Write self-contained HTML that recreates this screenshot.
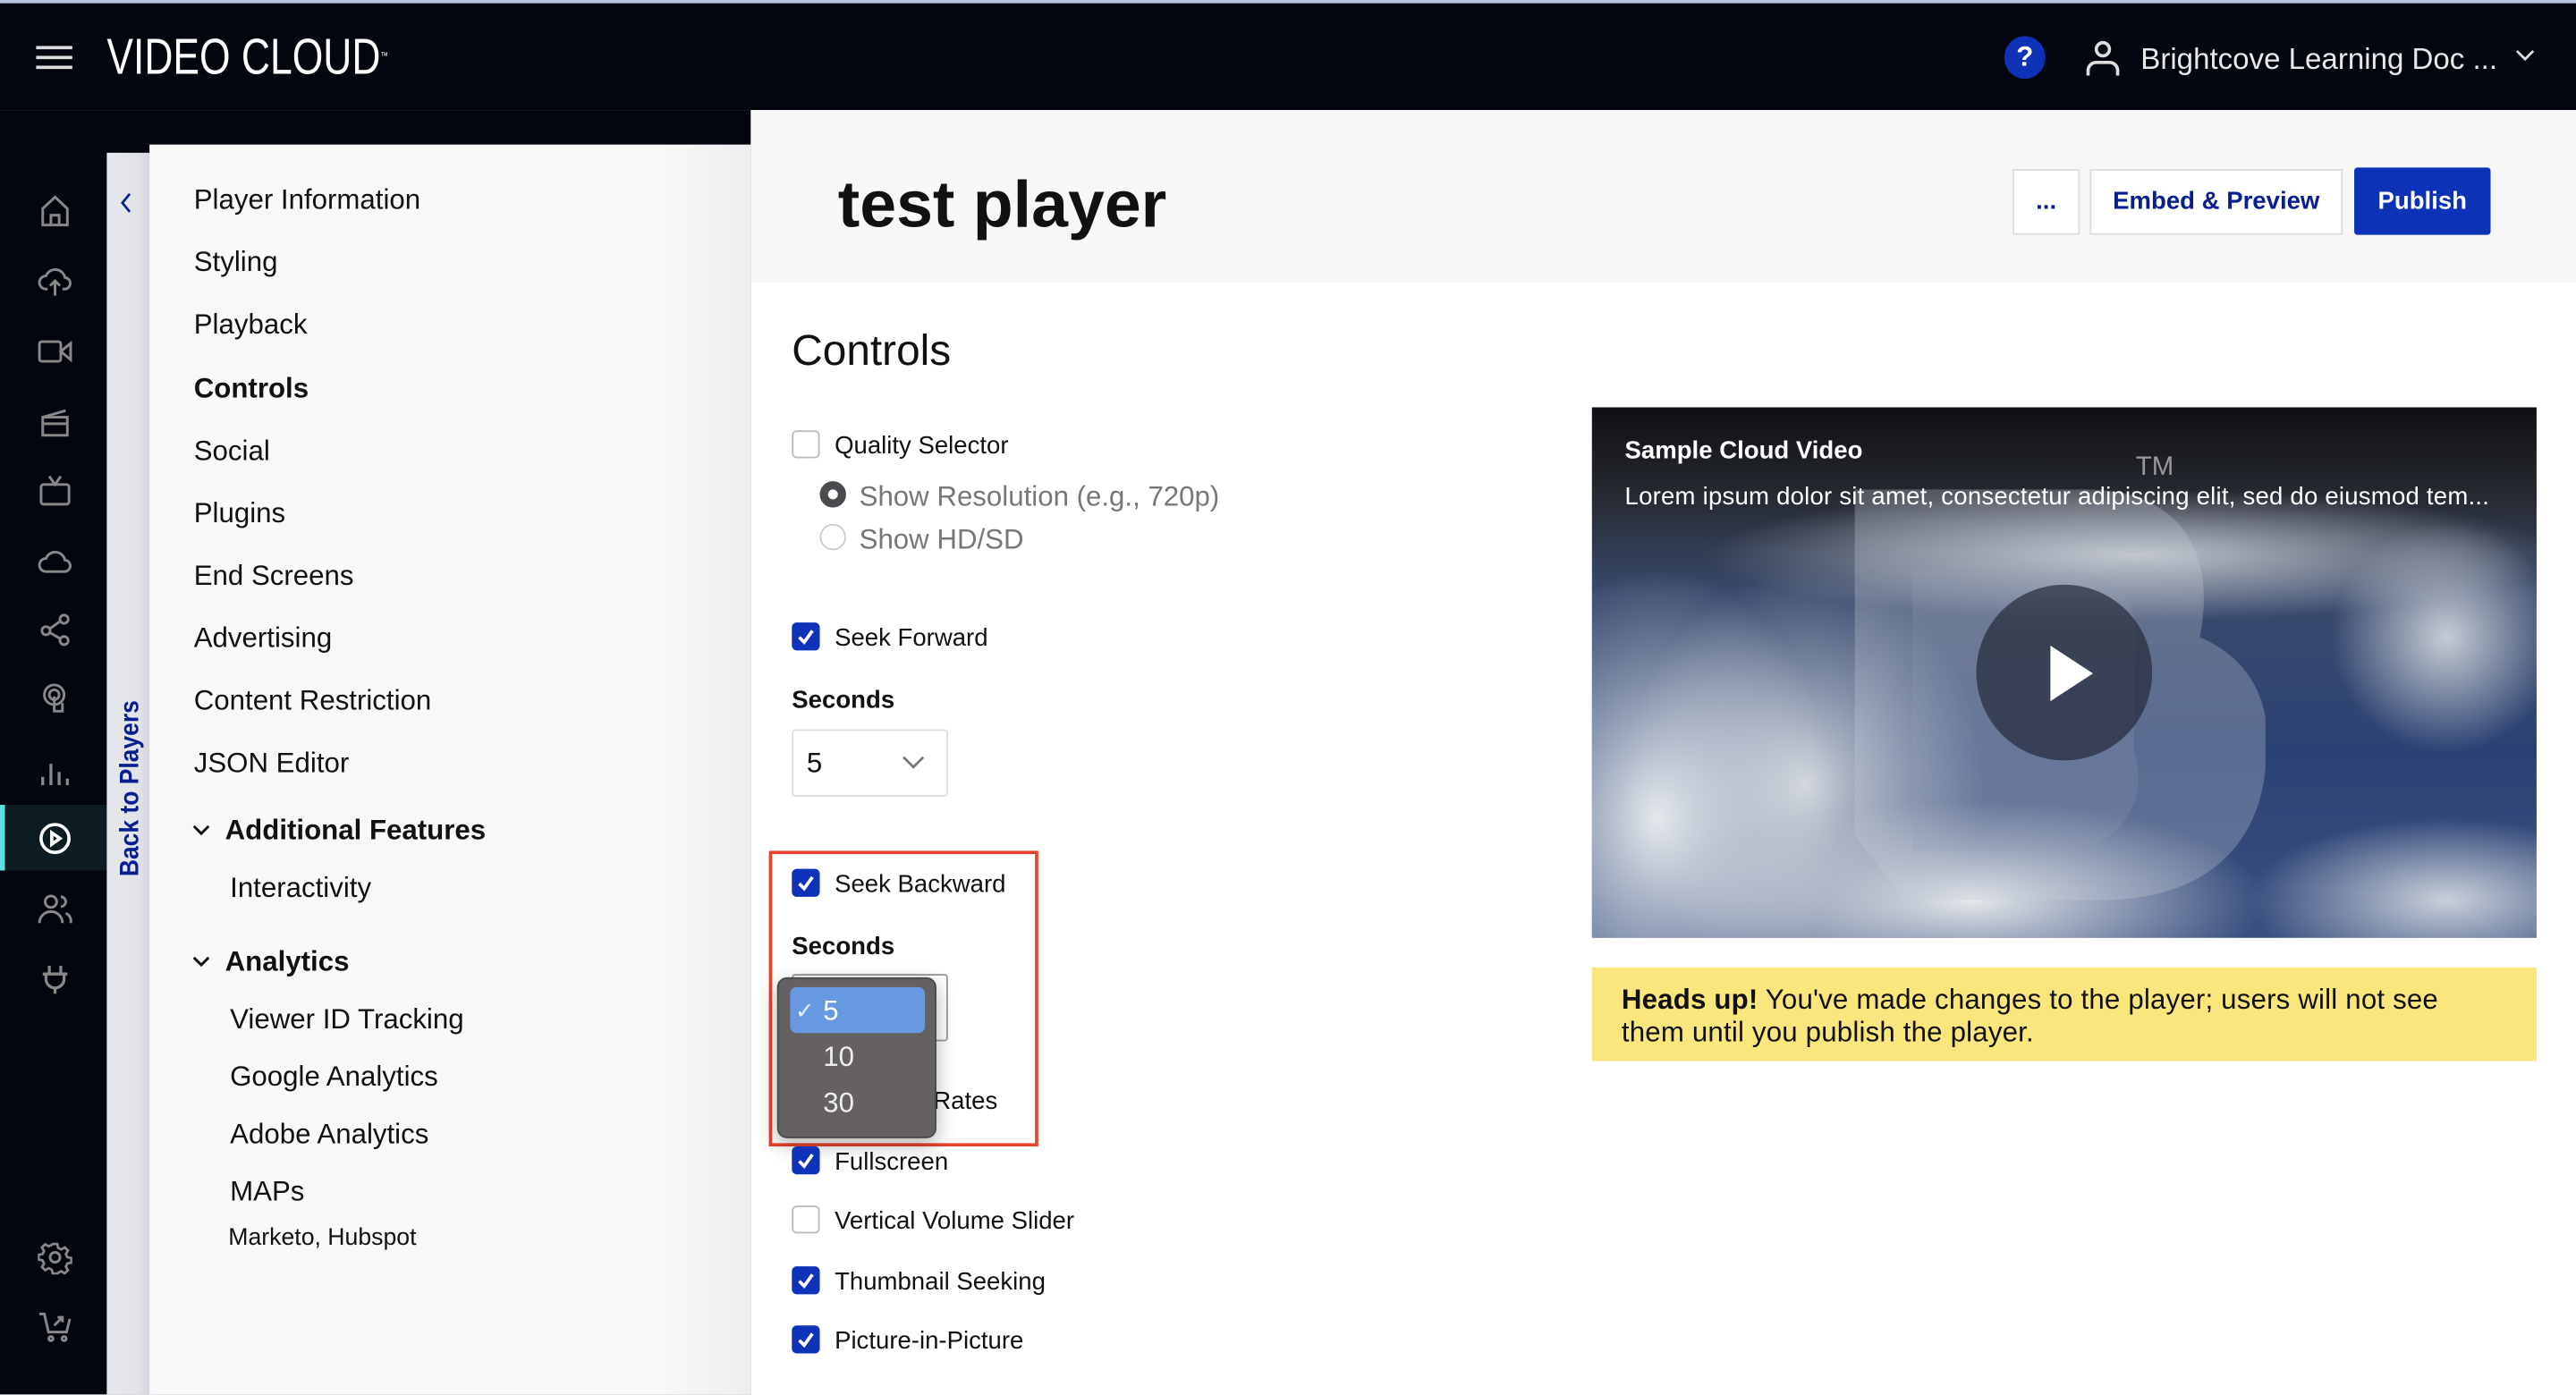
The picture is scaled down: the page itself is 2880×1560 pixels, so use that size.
<!DOCTYPE html>
<html><head><meta charset="utf-8"><style>
*{box-sizing:border-box;margin:0;padding:0}
html,body{width:2880px;height:1560px;overflow:hidden;background:#fff}
#s{position:absolute;left:0;top:0;width:1568px;height:849.4px;transform:scale(1.83674);transform-origin:0 0;font-family:"Liberation Sans",sans-serif;color:#111;background:#fff;overflow:hidden}
.a{position:absolute}
.ic{position:absolute;left:23px;width:21px;height:21px}
.mi{position:absolute;left:118px;font-size:17px;color:#111;line-height:20px;top:1px}
.cb{position:absolute;left:482px;width:17px;height:17px;border-radius:3px;background:#0e32b8}
.cb.off{background:#fff;border:1px solid #bbb}
.cb svg{position:absolute;left:3px;top:3px}
.lb{position:absolute;left:508px;font-size:15px;line-height:18px;color:#111}
</style></head><body><div id="s">
<div class="a" style="left:0;top:0;width:1568px;height:67px;background:#03050f"></div>
<div class="a" style="left:0;top:0;width:1568px;height:2px;background:#b8c4dc"></div>
<div class="a" style="left:0;top:67px;width:457px;height:790px;background:#03050f"></div>
<div class="a" style="left:22px;top:28px;width:22px;height:2px;background:#ddd"></div>
<div class="a" style="left:22px;top:34px;width:22px;height:2px;background:#ddd"></div>
<div class="a" style="left:22px;top:40px;width:22px;height:2px;background:#ddd"></div>
<div class="a" style="left:65px;top:17px;font-size:31px;color:#fff;line-height:36px;transform:scaleX(0.78);transform-origin:0 0;white-space:nowrap">VIDEO CLOUD<span style="font-size:6px;vertical-align:top">™</span></div>
<div class="a" style="left:1220px;top:22px;width:25px;height:26px;border-radius:50%;background:#0d32b5;color:#fff;font-weight:bold;font-size:17px;text-align:center;line-height:26px">?</div>
<svg class="a" style="left:1269px;top:24px" width="22" height="22" viewBox="0 0 22 22" fill="none" stroke="#ddd" stroke-width="2"><circle cx="11" cy="6" r="4"/><path d="M2 22v-3a5 5 0 0 1 5-5h8a5 5 0 0 1 5 5v3"/></svg>
<div class="a" style="left:1303px;top:25px;font-size:18px;color:#e8e8e8;line-height:22px">Brightcove Learning Doc ...</div>
<svg class="a" style="left:1531px;top:30px" width="12" height="8" viewBox="0 0 12 8" fill="none" stroke="#ddd" stroke-width="1.5"><path d="M1 1l5 5 5-5"/></svg>
<svg class="ic" style="top:118px" viewBox="0 0 21 21" fill="none" stroke="#888" stroke-width="1.6"><path d="M3 9l7.5-7 7.5 7v10H3z"/><path d="M8 19v-6h5v6"/></svg>
<svg class="ic" style="top:160px" viewBox="0 0 21 21" fill="none" stroke="#888" stroke-width="1.6"><path d="M6 16H5a4 4 0 0 1 0-8 6 6 0 0 1 11.5 1A3.5 3.5 0 0 1 16 16h-1"/><path d="M10.5 20v-9M7.5 14l3-3 3 3"/></svg>
<svg class="ic" style="top:203px" viewBox="0 0 21 21" fill="none" stroke="#888" stroke-width="1.6"><rect x="1" y="5" width="13" height="12" rx="1.5"/><path d="M14 11l6-5v10z"/></svg>
<svg class="ic" style="top:246px" viewBox="0 0 21 21" fill="none" stroke="#888" stroke-width="1.6"><rect x="3" y="8" width="15" height="11"/><path d="M3 8l14-4M3 12h15"/></svg>
<svg class="ic" style="top:288px" viewBox="0 0 21 21" fill="none" stroke="#888" stroke-width="1.6"><rect x="2" y="7" width="17" height="12" rx="1.5"/><path d="M7 2l3.5 5 3.5-5"/></svg>
<svg class="ic" style="top:331px" viewBox="0 0 21 21" fill="none" stroke="#888" stroke-width="1.6"><path d="M6 17H5a4 4 0 0 1 0-8 6 6 0 0 1 11.5 1A3.5 3.5 0 0 1 16 17z"/></svg>
<svg class="ic" style="top:373px" viewBox="0 0 21 21" fill="none" stroke="#888" stroke-width="1.6"><circle cx="5" cy="11" r="2.5"/><circle cx="16" cy="4" r="2.5"/><circle cx="16" cy="17" r="2.5"/><path d="M7 10l7-5M7 12l7 4"/></svg>
<svg class="ic" style="top:415px" viewBox="0 0 21 21" fill="none" stroke="#888" stroke-width="1.6"><circle cx="10" cy="8" r="6"/><circle cx="10" cy="8" r="3"/><path d="M10 9v9h5v-5"/></svg>
<svg class="ic" style="top:458px" viewBox="0 0 21 21" fill="none" stroke="#888" stroke-width="1.8"><path d="M3 20v-5M8 20V7M13 20v-8M18 20v-4"/></svg>
<div class="a" style="left:0;top:490px;width:65px;height:40px;background:#0d1b22"></div>
<div class="a" style="left:0;top:490px;width:3px;height:40px;background:#5fe0e0"></div>
<svg class="ic" style="top:500px" viewBox="0 0 21 21" fill="none" stroke="#fff" stroke-width="2"><circle cx="10.5" cy="10.5" r="8.5"/><path d="M8.5 7l5 3.5-5 3.5z"/></svg>
<svg class="ic" style="top:543px" viewBox="0 0 21 21" fill="none" stroke="#888" stroke-width="1.6"><circle cx="8" cy="6" r="3.5"/><path d="M1 19a7 7 0 0 1 14 0M14 3a3 3 0 0 1 0 6M17 13a5 5 0 0 1 3 6"/></svg>
<svg class="ic" style="top:585px" viewBox="0 0 21 21" fill="none" stroke="#888" stroke-width="1.8"><path d="M3 8h15M7 3v5M14 3v5M5 8v3a5.5 5.5 0 0 0 11 0V8M10.5 16v4"/></svg>
<svg class="ic" style="top:755px" viewBox="0 0 21 21" fill="none" stroke="#888" stroke-width="1.6"><circle cx="10.5" cy="10.5" r="3"/><path d="M9 2h3l.5 2.5 2 1 2.3-1.3 2 2-1.3 2.3 1 2 2.5.5v3l-2.5.5-1 2 1.3 2.3-2 2-2.3-1.3-2 1L12 21H9l-.5-2.5-2-1-2.3 1.3-2-2 1.3-2.3-1-2L0 12V9l2.5-.5 1-2L2.2 4.2l2-2 2.3 1.3 2-1z" transform="scale(.95) translate(.5 .5)"/></svg>
<svg class="ic" style="top:797px" viewBox="0 0 21 21" fill="none" stroke="#888" stroke-width="1.6"><path d="M1 3h3l2.5 11h11l2-8"/><circle cx="8" cy="18" r="1.3"/><circle cx="16" cy="18" r="1.3"/><path d="M10 10l5-5M12 5h3v3"/></svg>
<div class="a" style="left:65px;top:93px;width:27px;height:760px;background:linear-gradient(90deg,#e6e7ec,#e2e3e8 70%,#d4d5da)"></div>
<svg class="a" style="left:73px;top:117px" width="8" height="13" viewBox="0 0 8 13" fill="none" stroke="#0a1f8f" stroke-width="1.5"><path d="M6 1L1.5 6.5 6 12"/></svg>
<div class="a" style="left:80px;top:480px;transform:translate(-50%,-50%) rotate(-90deg) scaleX(0.9);white-space:nowrap;font-weight:bold;font-size:16px;color:#0a1f8f">Back to Players</div>
<div class="a" style="left:91px;top:88px;width:366px;height:770px;background:linear-gradient(90deg,#f8f8f8 85%,#eeeef0)"></div>
<div class="mi" style="top:112px">Player Information</div>
<div class="mi" style="top:150px">Styling</div>
<div class="mi" style="top:188px">Playback</div>
<div class="mi" style="top:227px;font-weight:bold">Controls</div>
<div class="mi" style="top:265px">Social</div>
<div class="mi" style="top:303px">Plugins</div>
<div class="mi" style="top:341px">End Screens</div>
<div class="mi" style="top:379px">Advertising</div>
<div class="mi" style="top:417px">Content Restriction</div>
<div class="mi" style="top:455px">JSON Editor</div>
<svg class="a" style="left:117px;top:502px" width="11" height="7" viewBox="0 0 11 7" fill="none" stroke="#111" stroke-width="1.6"><path d="M1 1l4.5 4.5L10 1"/></svg>
<div class="mi" style="left:137px;top:496px;font-weight:bold">Additional Features</div>
<div class="mi" style="left:140px;top:531px">Interactivity</div>
<svg class="a" style="left:117px;top:582px" width="11" height="7" viewBox="0 0 11 7" fill="none" stroke="#111" stroke-width="1.6"><path d="M1 1l4.5 4.5L10 1"/></svg>
<div class="mi" style="left:137px;top:576px;font-weight:bold">Analytics</div>
<div class="mi" style="left:140px;top:611px">Viewer ID Tracking</div>
<div class="mi" style="left:140px;top:646px">Google Analytics</div>
<div class="mi" style="left:140px;top:681px">Adobe Analytics</div>
<div class="mi" style="left:140px;top:716px">MAPs</div>
<div class="mi" style="left:139px;top:744px;font-size:14.5px">Marketo, Hubspot</div>
<div class="a" style="left:457px;top:67px;width:1111px;height:105px;background:#f7f7f7"></div>
<div class="a" style="left:510px;top:101px;font-size:40px;font-weight:bold;color:#111;line-height:48px">test player</div>
<div class="a" style="left:1225px;top:103px;width:41px;height:40px;background:#fff;border:1px solid #ddd;text-align:center;font-weight:bold;color:#0a1f8f;font-size:15px;line-height:38px">...</div>
<div class="a" style="left:1272px;top:103px;width:154px;height:40px;background:#fff;border:1px solid #ddd;text-align:center;font-weight:bold;color:#0a1f8f;font-size:15px;line-height:38px">Embed &amp; Preview</div>
<div class="a" style="left:1433px;top:102px;width:83px;height:41px;background:#0d32b5;border-radius:2px;text-align:center;font-weight:bold;color:#fff;font-size:15px;line-height:41px">Publish</div>
<div class="a" style="left:482px;top:198px;font-size:26px;line-height:30px">Controls</div>
<div class="cb off" style="top:262px"></div><div class="lb" style="top:263px">Quality Selector</div>
<div class="a" style="left:499px;top:293px;width:16px;height:16px;border-radius:50%;border:5px solid #4a4a4f;background:#fff"></div>
<div class="a" style="left:523px;top:293px;font-size:17px;color:#777">Show Resolution (e.g., 720p)</div>
<div class="a" style="left:499px;top:319px;width:16px;height:16px;border-radius:50%;border:1px solid #ccc"></div>
<div class="a" style="left:523px;top:319px;font-size:17px;color:#777">Show HD/SD</div>
<div class="cb" style="top:379px"><svg width="11" height="11" viewBox="0 0 11 11" fill="none" stroke="#fff" stroke-width="2"><path d="M1.5 6l3 3 5-7"/></svg></div><div class="lb" style="top:380px">Seek Forward</div>
<div class="a" style="left:482px;top:418px;font-size:15px;font-weight:bold">Seconds</div>
<div class="a" style="left:482px;top:444px;width:95px;height:41px;border:1px solid #ddd;border-radius:2px;background:#fff"></div>
<div class="a" style="left:491px;top:455px;font-size:17px">5</div>
<svg class="a" style="left:549px;top:460px" width="14" height="9" viewBox="0 0 14 9" fill="none" stroke="#777" stroke-width="1.5"><path d="M1 1l6 6 6-6"/></svg>
<div class="a" style="left:468px;top:518px;width:164px;height:180px;border:2px solid #e8432e"></div>
<div class="cb" style="top:529px"><svg width="11" height="11" viewBox="0 0 11 11" fill="none" stroke="#fff" stroke-width="2"><path d="M1.5 6l3 3 5-7"/></svg></div><div class="lb" style="top:530px">Seek Backward</div>
<div class="a" style="left:482px;top:568px;font-size:15px;font-weight:bold">Seconds</div>
<div class="a" style="left:482px;top:593px;width:95px;height:41px;border:1px solid #999;border-radius:2px;background:#fff"></div>
<div class="lb" style="top:662px;left:568px">Rates</div>
<div class="a" style="left:473px;top:595px;width:97px;height:98px;border-radius:6px;background:#656163;border:1px solid #4a4a4a;box-shadow:0 4px 12px rgba(0,0,0,.3)"></div>
<div class="a" style="left:481px;top:601px;width:82px;height:28px;border-radius:4px;background:#6699e2"></div>
<div class="a" style="left:484px;top:607px;font-size:14px;color:#eee">✓</div>
<div class="a" style="left:501px;top:606px;font-size:17px;color:#fff">5</div>
<div class="a" style="left:501px;top:634px;font-size:17px;color:#eee">10</div>
<div class="a" style="left:501px;top:662px;font-size:17px;color:#eee">30</div>
<div class="cb" style="top:698px"><svg width="11" height="11" viewBox="0 0 11 11" fill="none" stroke="#fff" stroke-width="2"><path d="M1.5 6l3 3 5-7"/></svg></div><div class="lb" style="top:699px">Fullscreen</div>
<div class="cb off" style="top:734px"></div><div class="lb" style="top:735px">Vertical Volume Slider</div>
<div class="cb" style="top:771px"><svg width="11" height="11" viewBox="0 0 11 11" fill="none" stroke="#fff" stroke-width="2"><path d="M1.5 6l3 3 5-7"/></svg></div><div class="lb" style="top:772px">Thumbnail Seeking</div>
<div class="cb" style="top:807px"><svg width="11" height="11" viewBox="0 0 11 11" fill="none" stroke="#fff" stroke-width="2"><path d="M1.5 6l3 3 5-7"/></svg></div><div class="lb" style="top:808px">Picture-in-Picture</div>
<div class="a" style="left:969px;top:248px;width:575px;height:323px;overflow:hidden;background:
radial-gradient(ellipse 110px 150px at 40px 250px,#e4e8ec,rgba(200,210,220,0) 100%),
radial-gradient(ellipse 110px 130px at 130px 230px,#cfd4da,rgba(180,190,200,0) 100%),
radial-gradient(ellipse 180px 60px at 230px 300px,#e6e9ec,rgba(220,225,230,0) 100%),
radial-gradient(ellipse 260px 40px at 330px 90px,#bfc4cc,rgba(200,200,210,0) 100%),
radial-gradient(ellipse 70px 70px at 520px 140px,#c6ccd5,rgba(200,200,210,0) 100%),
radial-gradient(ellipse 120px 50px at 520px 300px,#c9d0da,rgba(200,200,210,0) 100%),
linear-gradient(180deg,#0f1014 0%,#25282f 16%,#3a4a6c 35%,#2b4274 65%,#3a5080 100%)">
<svg class="a" style="left:150px;top:30px" width="260" height="270" viewBox="0 0 260 270"><path d="M10 20h140c60 0 80 40 70 90 35 15 45 45 40 80-5 50-40 80-100 80H40L10 230z" fill="rgba(200,205,215,.3)"/><path d="M45 70h95c35 0 45 25 40 50v60c10 30-10 60-45 60H45z" fill="rgba(150,160,180,.22)"/></svg>
<div class="a" style="left:331px;top:28px;font-size:16px;color:#999">TM</div>
<div class="a" style="left:234px;top:108px;width:107px;height:107px;border-radius:50%;background:rgba(30,35,50,.65)"></div>
<svg class="a" style="left:279px;top:145px" width="26" height="34" viewBox="0 0 26 34"><path d="M0 0l26 17L0 34z" fill="#fff"/></svg>
<div class="a" style="left:20px;top:18px;font-size:15px;font-weight:bold;color:#fff">Sample Cloud Video</div>
<div class="a" style="left:20px;top:46px;font-size:15px;color:#fff;white-space:nowrap;letter-spacing:0.12px">Lorem ipsum dolor sit amet, consectetur adipiscing elit, sed do eiusmod tem...</div>
</div>
<div class="a" style="left:969px;top:589px;width:575px;height:57px;background:#f9e67d;padding:10px 18px 0;font-size:17px;line-height:20px;color:#111;letter-spacing:0.1px"><b>Heads up!</b> You've made changes to the player; users will not see<br>them until you publish the player.</div>
</div></body></html>
